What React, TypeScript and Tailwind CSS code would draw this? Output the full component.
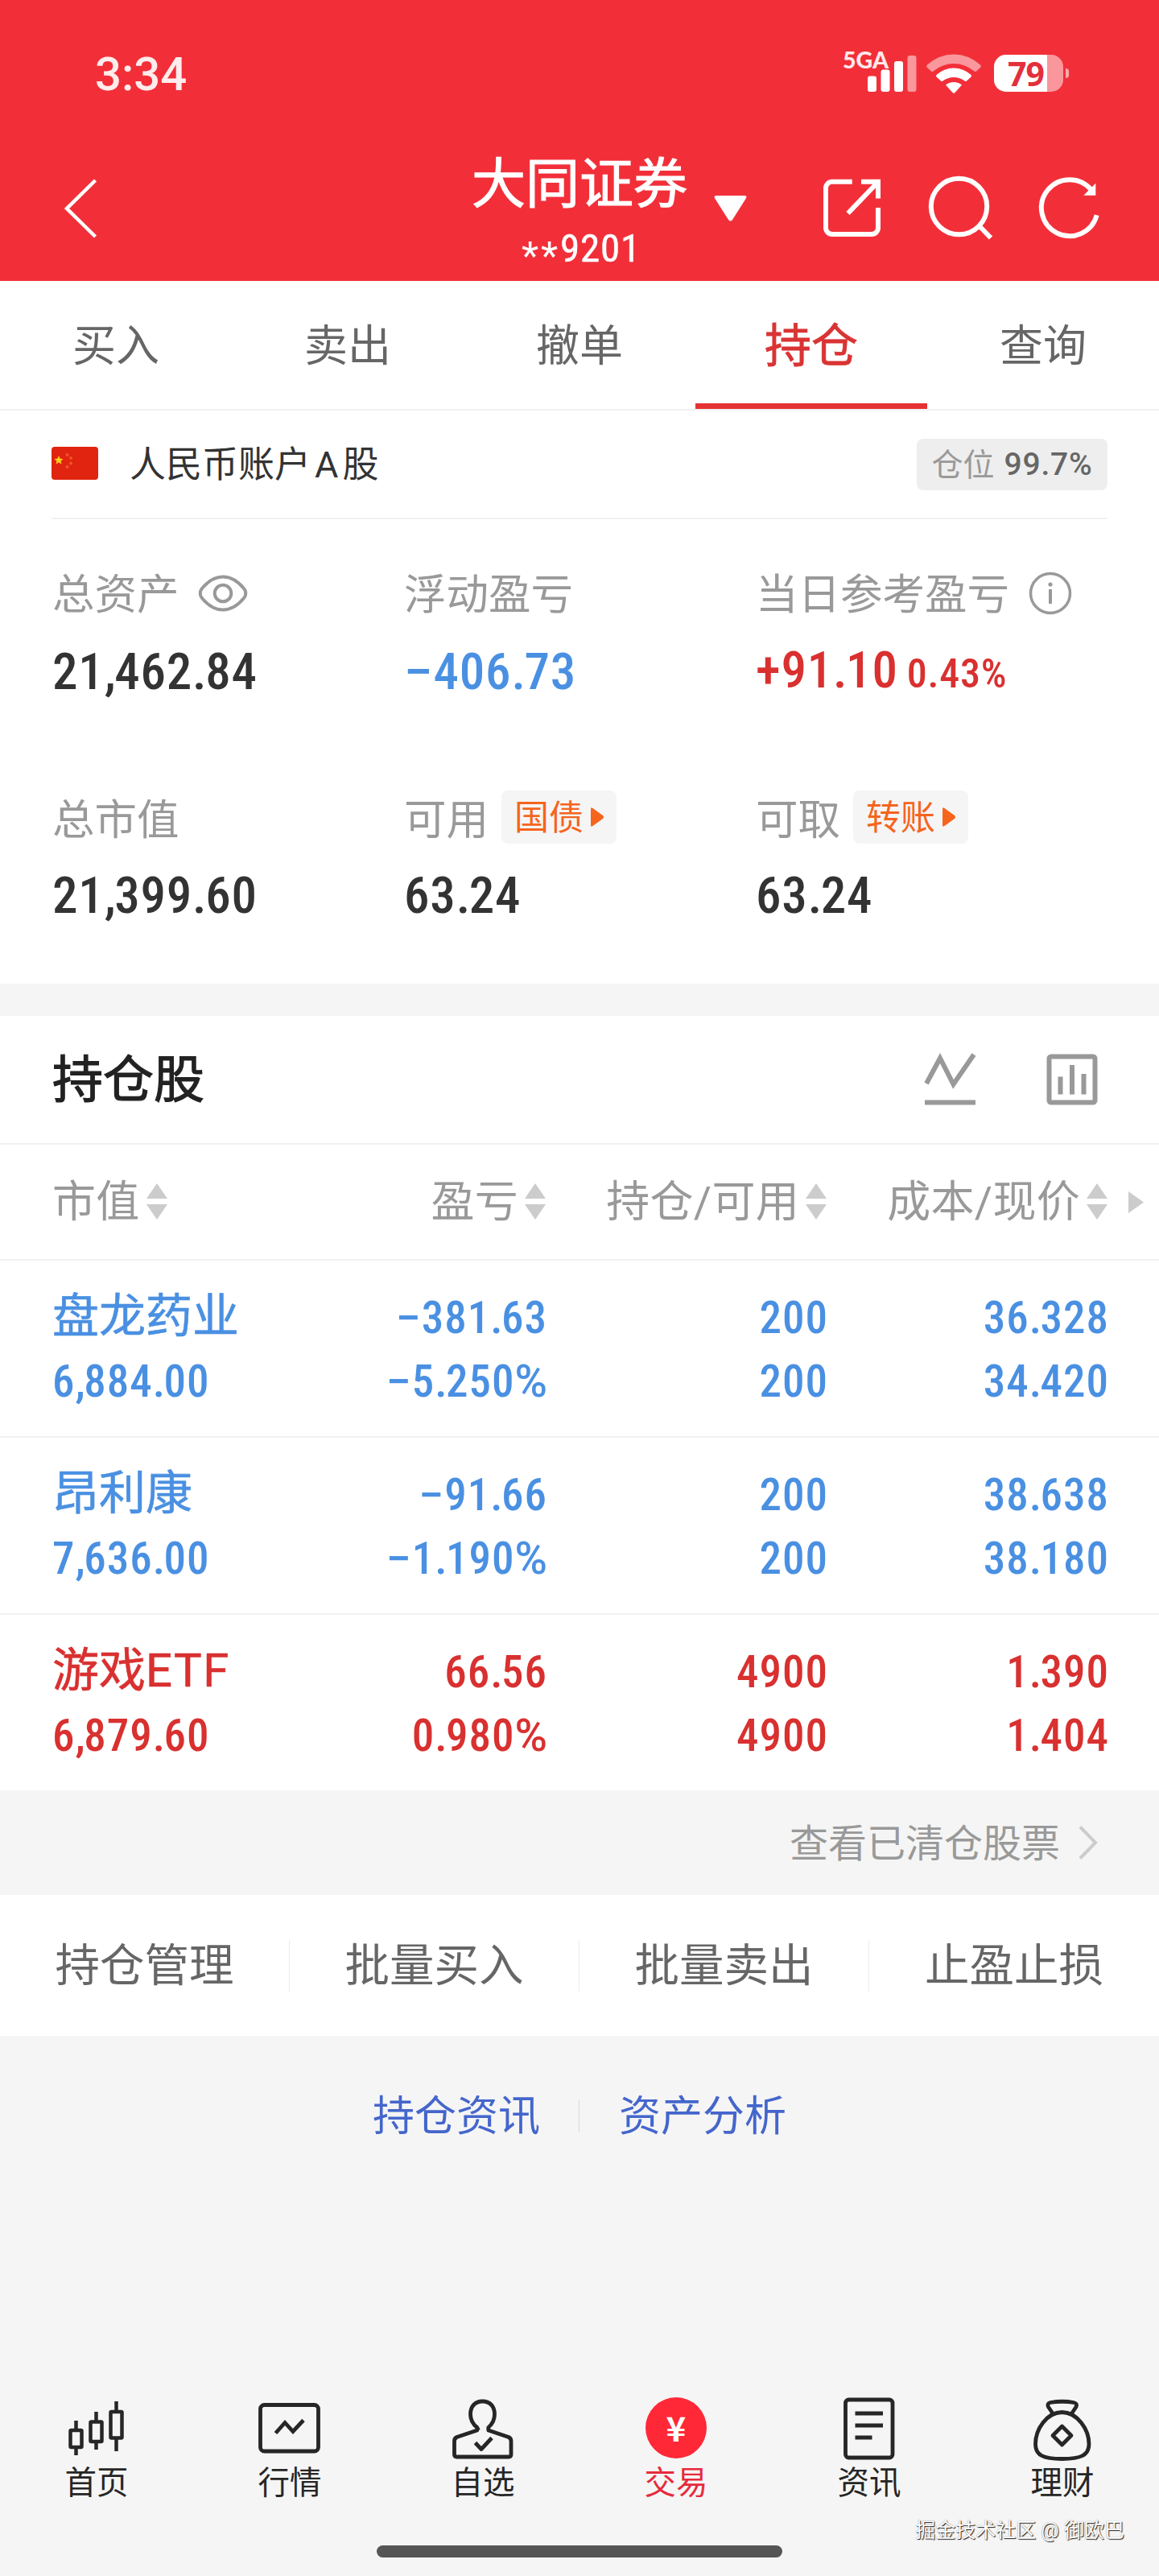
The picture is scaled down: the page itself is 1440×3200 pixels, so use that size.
import React from "react";

type Tone = "up" | "down";

const toneClass: Record<Tone, string> = {
  up: "text-[#d93030]",
  down: "text-[#4a90e2]",
};

function StatusBar() {
  return (
    <div className="flex h-[180px] items-start pl-[118px] pr-[112px] pt-[57px]">
      <div className="w-[120px] text-[58px] font-medium leading-[70px] text-[#ffecec]">3:34</div>
      <svg className="ml-auto" width="180" height="66" viewBox="0 0 180 66" fill="#fff">
        <text x="6" y="27.500" fontSize="29" fontWeight="900" fill="#ffe9e9" fontFamily="Lato, sans-serif" textLength="57" lengthAdjust="spacingAndGlyphs">5GA</text>
        <rect x="37" y="37.500" width="11" height="19.500" rx="3" />
        <rect x="53.500" y="29.500" width="11" height="27.500" rx="3" />
        <rect x="70" y="19" width="11" height="38" rx="3" />
        <rect x="86.500" y="12" width="11" height="45" rx="3" opacity="0.5" />
        <path d="M110.500 26.500Q109.500 25 111 23.500Q126 10.500 144 10.500T177 23.500Q178.500 25 177.500 26.500L172 31.500Q171 32.500 169.500 31.500Q158 22 144 22T118.500 31.500Q117 32.500 116 31.500Z" opacity="0.5" />
        <path d="M122.500 36Q132 27.500 144 27.500T165.500 36Q166.500 37 165.500 38.500L160 43.500Q159 44.500 157.500 43.500Q151.500 39 144 39T130.500 43.500Q129 44.500 128 43.500L122.500 38.500Q121.500 37 122.500 36Z" />
        <path d="M134 48.500Q138 45 144 45T154 48.500L145.500 58Q144 59.500 142.500 58Z" />
      </svg>
      <div className="ml-[14px] mt-[11px] flex items-center gap-[3px]">
        <div className="h-[46px] w-[86px] rounded-[15px] bg-white/50">
          <div className="flex h-[46px] w-[66px] items-center justify-end rounded-l-[15px] bg-white pr-[4px] font-['Open_Sans'] text-[41px] font-bold leading-[46px] tracking-[-1px] text-[#e42f3c]">
            79
          </div>
        </div>
        <div className="h-[12px] w-[4px] rounded-r-full bg-white/60" />
      </div>
    </div>
  );
}

function TitleBar() {
  return (
    <div className="flex h-[169px] items-start text-white">
      <svg className="ml-[74px] mt-[36px] shrink-0" width="56" height="84" viewBox="0 0 56 84" fill="none" stroke="currentColor" strokeWidth="4.500">
        <path d="M44.500 8L9 43L44.500 78" />
      </svg>
      <div className="ml-[456px] w-[270px] shrink-0">
        <div className="whitespace-nowrap text-[67px] leading-[98px] [-webkit-text-stroke:1.2px_white]">大同证券</div>
        <div className="flex pl-[62px] text-[49px] leading-[62px] [font-stretch:75%]">
          <span className="relative top-[9px] w-[48px] tracking-[3px] [font-stretch:100%]">**</span>
          <span className="tracking-[0.8px] [-webkit-text-stroke:0.5px_white]">9201</span>
        </div>
      </div>
      <svg className="ml-[31px] mt-[62px] shrink-0" width="41" height="34" viewBox="0 0 41 34" fill="currentColor">
        <path d="M3 1H38Q42 1 39.500 5L23 31Q20.500 34 18 31L1.500 5Q-1 1 3 1Z" />
      </svg>
      <svg className="ml-[89px] mt-[36px] shrink-0" width="84" height="84" viewBox="0 0 84 84" fill="none" stroke="currentColor" strokeWidth="6">
        <path d="M41.700 9.700H17A8 8 0 0 0 9 17.700V67A8 8 0 0 0 17 75H66A8 8 0 0 0 74 67V42" />
        <path d="M53 9.700H74V30.500M36.500 49L73 11" />
      </svg>
      <svg className="ml-[47px] mt-[32px] shrink-0" width="90" height="90" viewBox="0 0 90 90" fill="none" stroke="currentColor" strokeWidth="6">
        <circle cx="43.500" cy="44.500" r="34.700" />
        <path d="M69 69L83 83.500" />
      </svg>
      <svg className="ml-[47px] mt-[32px] shrink-0" width="86" height="90" viewBox="0 0 86 90" fill="none" stroke="currentColor" strokeWidth="6">
        <path d="M77.700 55.300A35 35 0 1 1 71 24" />
        <path d="M76.300 15.700V30.700H61.300Z" fill="currentColor" stroke="none" />
      </svg>
    </div>
  );
}

const tabs = ["买入", "卖出", "撤单", "持仓", "查询"];

function Tabs() {
  return (
    <div className="flex h-[161px] border-b-2 border-[#f1f1f1] bg-white">
      {tabs.map((t) =>
        t === "持仓" ? (
          <div key={t} className="flex h-[159px] w-[288px] flex-col items-center justify-between text-[58px] text-[#d93434]">
            <span className="leading-[162px] [-webkit-text-stroke:0.8px_#d93434]">{t}</span>
            <span className="-mt-[11px] h-[7px] w-full shrink-0 bg-[#e53333]" />
          </div>
        ) : (
          <div key={t} className="w-[286px] text-center text-[54px] leading-[163px] text-[#666666] first:w-[288px] last:w-[288px] odd:w-[288px] even:w-[288px]">{t}</div>
        ),
      )}
    </div>
  );
}

function Flag() {
  return (
    <svg className="-mt-[2px]" width="58" height="41" viewBox="0 0 58 41">
      <rect width="58" height="41" rx="4" fill="#e02410" />
      <path d="M9 11L10.600 14.800L14.500 15L11.500 17.700L12.500 21.500L9 19.400L5.500 21.500L6.500 17.700L3.500 15L7.400 14.800Z" fill="#ffd21a" />
      <g fill="#f0552a">
        <circle cx="19.500" cy="10" r="2" />
        <circle cx="24" cy="14" r="2" />
        <circle cx="24" cy="20.500" r="2" />
        <circle cx="19.500" cy="25" r="2" />
      </g>
    </svg>
  );
}

function AccountRow() {
  return (
    <div className="mx-[64px] flex h-[135px] items-center border-b-2 border-[#f1f1f1]">
      <Flag />
      <span className="ml-[39px] pt-[2px] text-[45px] leading-[60px] text-[#333333]">
        人民币账户<span className="mx-[5px]">A</span>股
      </span>
      <span className="ml-auto flex h-[64px] w-[237px] items-center justify-center gap-[12px] rounded-[8px] bg-[#eeeeee]">
        <span className="pt-[2px] text-[39px] leading-[60px] text-[#999999]">仓位</span>
        <span className="text-[39px] font-medium leading-[60px] tracking-[0.8px] text-[#666666] [font-stretch:88%]">99.7%</span>
      </span>
    </div>
  );
}

function Label({ text, children }: { text: string; children?: React.ReactNode }) {
  return (
    <div className="flex h-[66px] items-center whitespace-nowrap text-[52.500px] text-[#999999]">
      <span className="pt-[3px] leading-[62px]">{text}</span>
      {children}
    </div>
  );
}

function Tag({ text }: { text: string }) {
  return (
    <span className="relative -top-[2px] ml-[16px] flex h-[66px] w-[143px] items-center rounded-[8px] bg-[#f5f5f5] pl-[16px] text-[43px] text-[#f5651d]">
      <span className="pt-[2px] leading-[60px]">{text}</span>
      <svg className="ml-[9px]" width="17" height="24" viewBox="0 0 17 24" fill="currentColor">
        <path d="M0 2Q0 -1 2.500 1L15 10Q17 12 15 14L2.500 23Q0 25 0 22Z" />
      </svg>
    </span>
  );
}

// Condensed figures with a full-width sign and percent mark.
function Num({ text }: { text: string }) {
  return (
    <>
      {text.split("").map((c, i) => {
        if (c === "−") return <span key={i} className="tracking-[1px] [font-stretch:90%]">{c}</span>;
        if (c === "%") return <span key={i} className="tracking-normal [font-stretch:90%]">{c}</span>;
        if (c === "." || c === ",") return <span key={i} className="tracking-[-1.500px]">{c}</span>;
        return <span key={i}>{c}</span>;
      })}
    </>
  );
}

function Value({ text, className, children }: { text: string; className: string; children?: React.ReactNode }) {
  return (
    <div className={"whitespace-nowrap text-[63px] font-medium leading-[70px] tracking-[0.8px] [font-stretch:75%] " + className}>
      <Num text={text} />
      {children}
    </div>
  );
}

function Assets() {
  return (
    <div className="h-[577px] pl-[65px] pt-[59px]">
      <div className="grid grid-cols-[437px_437px_437px]">
        <div>
          <Label text="总资产">
            <svg className="ml-[23px]" width="62" height="46" viewBox="0 0 62 46" fill="none" stroke="currentColor" strokeWidth="4">
              <path d="M3 23Q2 21 5 17Q17 2.500 31 2.500T57 17Q60 21 59 23Q60 25 57 29Q45 43.500 31 43.500T5 29Q2 25 3 23Z" />
              <circle cx="31" cy="23" r="10.300" />
            </svg>
          </Label>
          <Value className="mt-[30px] text-[#333333]" text="21,462.84" />
        </div>
        <div>
          <Label text="浮动盈亏" />
          <Value className="mt-[30px] text-[#4a90e2]" text="−406.73" />
        </div>
        <div>
          <Label text="当日参考盈亏">
            <svg className="ml-[24px]" width="54" height="54" viewBox="0 0 54 54" fill="none" stroke="currentColor" strokeWidth="3.500">
              <circle cx="27" cy="27" r="24.500" />
              <path d="M27 22V40" strokeWidth="4" />
              <circle cx="27" cy="16" r="2.600" fill="currentColor" stroke="none" />
            </svg>
          </Label>
          <Value className="mt-[28px] text-[#d93030]" text="+91.10">
            <span className="ml-[11px] text-[50px] [font-stretch:86%]">0.43%</span>
          </Value>
        </div>
      </div>
      <div className="mt-[112px] grid grid-cols-[437px_437px_437px]">
        <div>
          <Label text="总市值" />
          <Value className="mt-[28px] text-[#333333]" text="21,399.60" />
        </div>
        <div>
          <Label text="可用"><Tag text="国债" /></Label>
          <Value className="mt-[28px] text-[#333333]" text="63.24" />
        </div>
        <div>
          <Label text="可取"><Tag text="转账" /></Label>
          <Value className="mt-[28px] text-[#333333]" text="63.24" />
        </div>
      </div>
    </div>
  );
}

function HoldingsHeader() {
  return (
    <div className="flex h-[160px] items-center border-b-2 border-[#f1f1f1] pl-[65px] pr-[75px]">
      <span className="pt-[1px] text-[63px] leading-[80px] text-[#222222] [-webkit-text-stroke:1.2px_#222222]">持仓股</span>
      <svg className="ml-auto" width="66" height="66" viewBox="0 0 66 66" fill="none" stroke="#999999" strokeWidth="6">
        <path d="M3 38L20 6.500L36.500 39L62 2M1 61.500H64" />
      </svg>
      <svg className="ml-[85px]" width="66" height="66" viewBox="0 0 66 66" fill="none" stroke="#999999" strokeWidth="6">
        <rect x="4.500" y="4.500" width="57" height="57" rx="2.500" />
        <path d="M18.500 29.500V51.500M33 15V51.500M47.500 26V51.500" />
      </svg>
    </div>
  );
}

function SortIcon() {
  return (
    <svg className="ml-[7px] mr-px" width="28" height="46" viewBox="0 0 28 46" fill="#cccccc">
      <path d="M14 0L27 19H1ZM14 45L27 26H1Z" />
    </svg>
  );
}

const headCell = "flex items-center justify-end";
const headText = "pt-[2px] text-[54px] leading-[70px] tracking-[0.3px]";

function ColumnHeads() {
  return (
    <div className="flex h-[144px] items-center border-b-2 border-[#f1f1f1] pl-[65px] text-[#999999]">
      <div className="flex w-[265px] items-center">
        <span className={headText}>市值</span>
        <SortIcon />
      </div>
      <div className={headCell + " w-[350px]"}><span className={headText}>盈亏</span><SortIcon /></div>
      <div className={headCell + " w-[349px]"}><span className={headText}>持仓/可用</span><SortIcon /></div>
      <div className={headCell + " w-[349px]"}><span className={headText}>成本/现价</span><SortIcon /></div>
      <svg className="ml-[24px]" width="19" height="27" viewBox="0 0 19 27" fill="#cccccc"><path d="M0 0L19 13.500L0 27Z" /></svg>
    </div>
  );
}

const holdings: { name: string; value: string; tone: Tone; cols: [string, string][] }[] = [
  { name: "盘龙药业", value: "6,884.00", tone: "down", cols: [["−381.63", "−5.250%"], ["200", "200"], ["36.328", "34.420"]] },
  { name: "昂利康", value: "7,636.00", tone: "down", cols: [["−91.66", "−1.190%"], ["200", "200"], ["38.638", "38.180"]] },
  { name: "游戏ETF", value: "6,879.60", tone: "up", cols: [["66.56", "0.980%"], ["4900", "4900"], ["1.390", "1.404"]] },
];

function HoldingRow({ h, last }: { h: (typeof holdings)[number]; last: boolean }) {
  return (
    <div
      className={
        "flex pl-[65px] pt-[32px] text-[55px] font-medium leading-[79px] tracking-[1px] [font-stretch:75%] " +
        (last ? "h-[218px] " : "h-[220px] border-b-2 border-[#f1f1f1] ") +
        toneClass[h.tone]
      }
    >
      <div className="w-[265px]">
        <div className="h-[79px] whitespace-nowrap text-[58px] font-normal leading-[75px] tracking-normal [-webkit-text-stroke:0.6px] [font-stretch:100%]">
          {h.name.replace("ETF", "")}
          {h.name.endsWith("ETF") && <span className="tracking-[1.500px]">ETF</span>}
        </div>
        <div><Num text={h.value} /></div>
      </div>
      {h.cols.map(([a, b], i) => (
        <div key={i} className={i === 0 ? "w-[350px] text-right" : "w-[349px] text-right"}>
          <div><Num text={a} /></div>
          <div><Num text={b} /></div>
        </div>
      ))}
    </div>
  );
}

const actions = ["持仓管理", "批量买入", "批量卖出", "止盈止损"];

const navItems: { label: string; icon: React.ReactNode }[] = [
  {
    label: "首页",
    icon: (
      <g strokeWidth="4.500">
        <rect x="7.500" y="43" width="14" height="21" rx="1" />
        <rect x="32.500" y="32.500" width="14" height="24.500" rx="1" />
        <rect x="57.500" y="20" width="14" height="32.500" rx="1" />
        <path d="M14.500 31V43M14.500 64V74M39.500 20V32M39.500 57V67M64.500 7V20M64.500 52V69" />
      </g>
    ),
  },
  {
    label: "行情",
    icon: (
      <g strokeWidth="4.800">
        <rect x="3.500" y="11.500" width="72" height="57.500" rx="5" />
        <path d="M22.500 46.500L34 33.500L44 44.500L57 30.500" />
      </g>
    ),
  },
  {
    label: "自选",
    icon: (
      <g strokeWidth="4.800" strokeLinejoin="round">
        <path d="M34.500 43L32.800 39.500C27 35 24.500 29.500 24.500 23C24.500 13 30.500 7 39.500 7S54.500 13 54.500 23C54.500 29.500 52 35 46.800 39.500V43L72 51.500Q75 53 75 56.500V73Q75 76 72 76H7.500Q4.500 76 4.500 73V56.500Q4.500 53 7.500 51.500L32.800 43V39.500" />
        <path d="M30.500 58.500L38 66.500L51 52.500" />
      </g>
    ),
  },
  { label: "交易", icon: null },
  {
    label: "资讯",
    icon: (
      <g strokeWidth="4.800">
        <rect x="10.500" y="5" width="58.500" height="72" rx="4" />
        <path d="M22.500 22H57M22.500 37H57M22.500 52H43.500" />
      </g>
    ),
  },
  {
    label: "理财",
    icon: (
      <g strokeWidth="4.800" strokeLinejoin="round">
        <path d="M28 22L22.500 14Q20.500 9.500 25 8.500Q40 6 54 8.500Q59 9.500 57 14L51.500 22" />
        <path d="M39.500 20.500C59 21 73 42 73 60C73 74 63 78.500 39.500 78.500S6.500 74 6.500 60C6.500 42 20 21 39.500 20.500Z" />
        <path d="M39.500 38L51 49.500L39.500 61L28 49.500Z" />
      </g>
    ),
  },
];

function BottomNav() {
  return (
    <div className="flex h-[186px]">
      {navItems.map((n) => (
        <div key={n.label} className="flex w-[240px] flex-col items-center">
          {n.icon ? (
            <svg width="80" height="84" viewBox="0 0 80 84" fill="none" stroke="#262626">{n.icon}</svg>
          ) : (
            <div className="flex h-[84px] items-start pt-[2px]">
              <div className="h-[76px] w-[76px] rounded-full bg-[#ff2837] text-center font-['Noto_Sans_CJK_SC'] text-[42px] font-bold leading-[74px] text-white">¥</div>
            </div>
          )}
          <span className={"text-[39.500px] leading-[50px] " + (n.icon ? "text-[#262626]" : "text-[#e62b3c]")}>{n.label}</span>
        </div>
      ))}
    </div>
  );
}

export default function App() {
  return (
    <div className="relative h-[3200px] w-[1440px] overflow-hidden bg-[#f5f5f5] font-[Roboto,'Noto_Sans_CJK_SC',sans-serif]">
      <header className="bg-[#f22f39]">
        <StatusBar />
        <TitleBar />
      </header>
      <Tabs />
      <section className="bg-white">
        <AccountRow />
        <Assets />
      </section>
      <section className="mt-[40px] bg-white">
        <HoldingsHeader />
        <ColumnHeads />
        {holdings.map((h, i) => (
          <HoldingRow key={h.name} h={h} last={i === holdings.length - 1} />
        ))}
      </section>
      <div className="flex h-[130px] items-center justify-end pr-[76px] text-[#999999]">
        <span className="pt-[3px] text-[48px] leading-[60px]">查看已清仓股票</span>
        <svg className="ml-[23px]" width="24" height="42" viewBox="0 0 24 42" fill="none" stroke="#cccccc" strokeWidth="4"><path d="M2 1.500L21 21L2 40.500" /></svg>
      </div>
      <div className="flex h-[175px] items-center bg-white">
        {actions.map((a, i) => (
          <div
            key={a}
            className={"h-[64px] w-[360px] text-center text-[55.500px] leading-[66px] text-[#666666] " + (i < 3 ? "border-r border-[#ececec]" : "")}
          >
            {a}
          </div>
        ))}
      </div>
      <div className="flex h-[447px] items-start justify-center pt-[69px] text-[52px] leading-[64px] text-[#4466cc]">
        <span>持仓资讯</span>
        <span className="ml-[48px] mr-[49px] mt-[10px] h-[40px] w-px bg-[#d8d8d8]" />
        <span>资产分析</span>
      </div>
      <BottomNav />
      <div className="mx-auto h-[15px] w-[504px] rounded-full bg-[#555555]" />
      <div className="absolute right-[43px] top-[3126px] whitespace-nowrap text-[25px] leading-[36px] text-white [text-shadow:1px_1px_1px_#222,0_0_1px_#777]">
        掘金技术社区 @ 御欧巴
      </div>
    </div>
  );
}
